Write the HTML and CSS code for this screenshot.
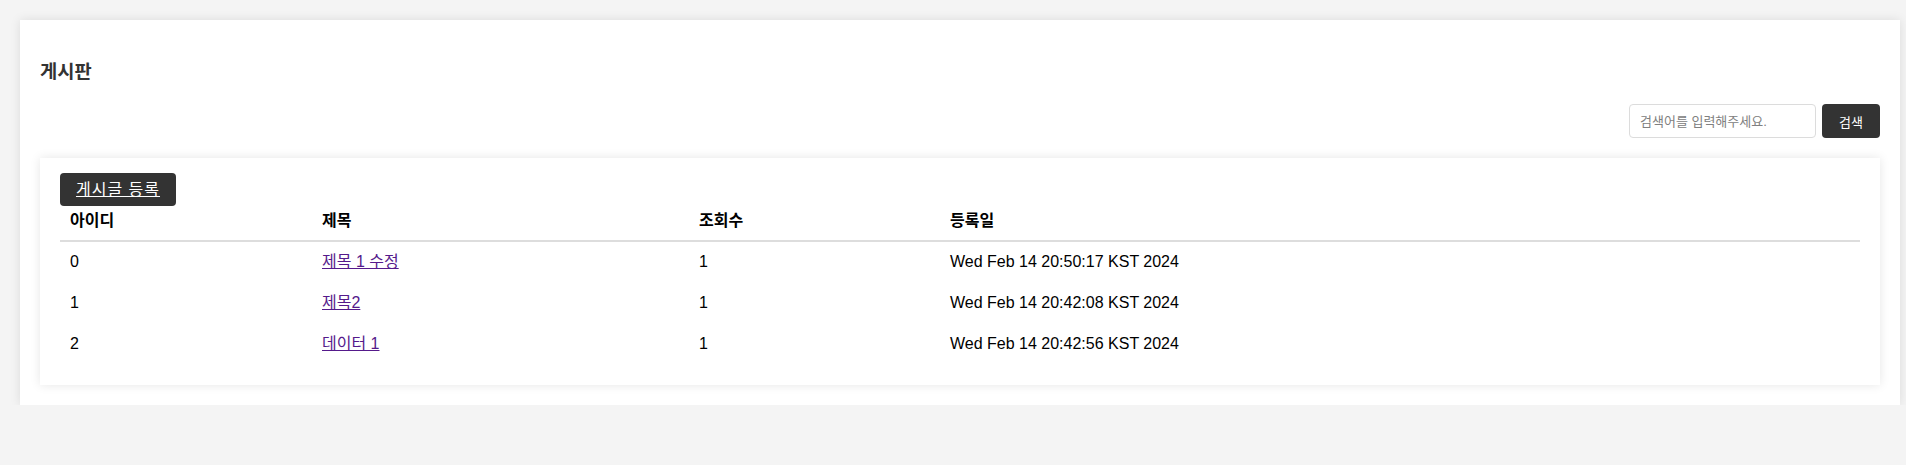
FILE: index.html
```html
<!DOCTYPE html>
<html lang="ko">
<head>
<meta charset="utf-8">
<title>게시판</title>
<link rel="stylesheet" href="styles.css">
</head>
<body>
<div class="container">
  <h3 class="title">게시판</h3>
  <form class="search">
    <input class="search-input" type="text" placeholder="검색어를 입력해주세요.">
    <button class="search-btn" type="button">검색</button>
  </form>
  <div class="card">
    <a class="write-btn" href="#">게시글 등록</a>
    <table class="board">
      <thead>
        <tr><th class="col-id">아이디</th><th class="col-title">제목</th><th class="col-views">조회수</th><th>등록일</th></tr>
      </thead>
      <tbody>
        <tr><td>0</td><td><a class="post-link" href="#">제목 1 수정</a></td><td>1</td><td>Wed Feb 14 20:50:17 KST 2024</td></tr>
        <tr><td>1</td><td><a class="post-link" href="#">제목2</a></td><td>1</td><td>Wed Feb 14 20:42:08 KST 2024</td></tr>
        <tr><td>2</td><td><a class="post-link" href="#">데이터 1</a></td><td>1</td><td>Wed Feb 14 20:42:56 KST 2024</td></tr>
      </tbody>
    </table>
  </div>
</div>
</body>
</html>
```

FILE: styles.css
```css
html, body {
  margin: 0;
  padding: 0;
  background: #f4f4f4;
}

body {
  font-family: "Liberation Sans", "Noto Sans CJK KR", Arial, sans-serif;
  font-size: 16px;
  color: #000;
}

.container {
  background: #fff;
  margin: 20px 6px 0 20px;
  padding: 20px 20px 20px;
  box-shadow: 0 0 10px rgba(0, 0, 0, 0.1);
}

.title {
  font-size: 18.72px;
  font-weight: bold;
  color: #333;
  line-height: 27px;
  margin: 18px 0 19px;
}

.search {
  display: flex;
  justify-content: flex-end;
  gap: 6px;
  margin: 0;
}

.search-input {
  box-sizing: border-box;
  width: 187px;
  height: 34px;
  padding: 0 10px;
  border: 1px solid #dcdcdc;
  border-radius: 4px;
  font-family: "Liberation Sans", "Noto Sans CJK KR", sans-serif;
  font-size: 13px;
  color: #333;
  outline: none;
}

.search-input::placeholder {
  color: #808080;
}

.search-btn {
  box-sizing: border-box;
  width: 58px;
  height: 34px;
  border: none;
  border-radius: 4px;
  background: #333;
  color: #fff;
  font-family: "Liberation Sans", "Noto Sans CJK KR", sans-serif;
  font-size: 13px;
  padding: 0;
}

.card {
  background: #fff;
  margin-top: 20px;
  padding: 15px 20px 20px;
  box-shadow: 0 0 10px rgba(0, 0, 0, 0.1);
}

.write-btn {
  display: inline-block;
  box-sizing: border-box;
  width: 116px;
  text-align: center;
  background: #333;
  color: #fff;
  text-decoration: underline;
  border-radius: 4px;
  padding: 5px 0;
  line-height: 23px;
  font-size: 16px;
  letter-spacing: 1px;
  vertical-align: top;
}

.board {
  width: 100%;
  border-collapse: collapse;
}

.board th {
  text-align: left;
  font-weight: bold;
  padding: 2px 10px 7px;
  line-height: 25px;
  border-bottom: 2px solid #dddddd;
}

.board .col-id { width: 232px; }
.board .col-title { width: 357px; }
.board .col-views { width: 231px; }

.board td {
  padding: 7px 10px 9px;
  line-height: 25px;
}

.post-link {
  color: #551a8b;
  text-decoration: underline;
}
```
